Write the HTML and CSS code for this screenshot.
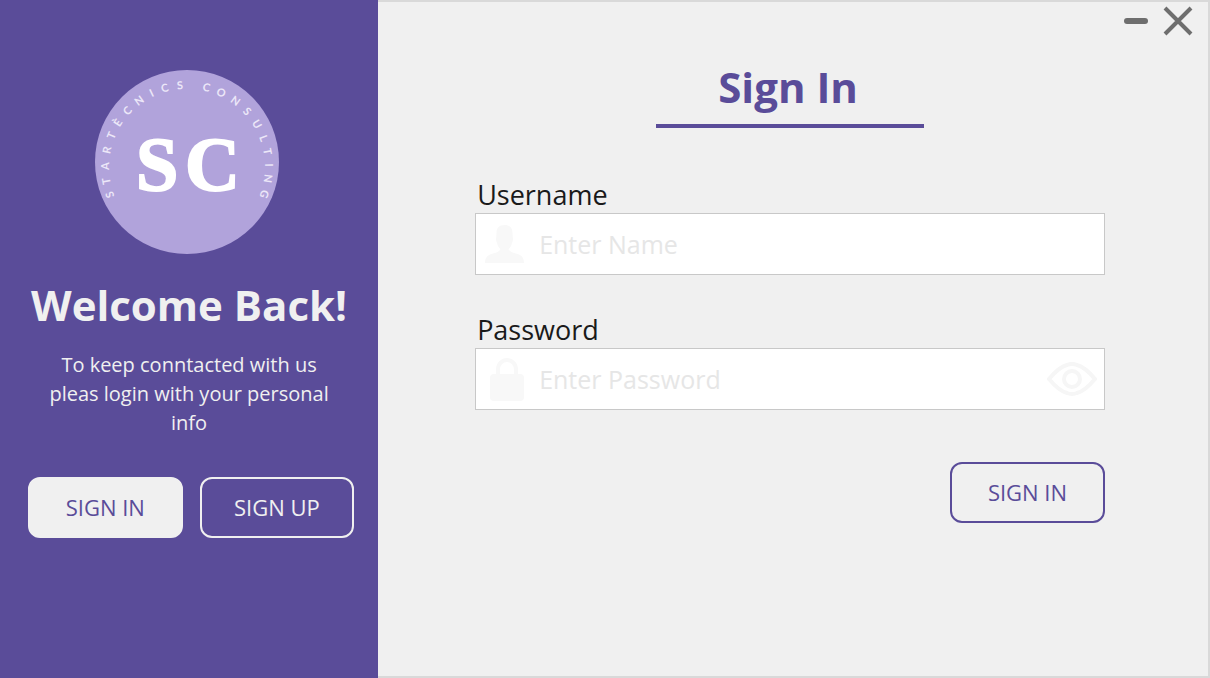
FILE: index.html
```html
<!DOCTYPE html>
<html lang="en">
<head>
<meta charset="utf-8">
<meta name="viewport" content="width=device-width, initial-scale=1">
<title>Sign In</title>
<link rel="stylesheet" href="styles.css">
</head>
<body>
<div class="window">
  <aside class="sidebar">
    <svg class="logo" viewBox="0 0 184 184" role="img" aria-label="Startècnics Consulting">
      <circle class="logo-disc" cx="92" cy="92" r="92"/>
      <path id="logo-arc" fill="none" d="M24.5 136A78 78 0 1 1 159.5 136"/>
      <text class="logo-ring" dx="11 7 8 8 8 7 8 7 8 8 8 0 16 7 7 8 8 8 8 8 7 7"><textPath href="#logo-arc">STARTÈCNICS CONSULTING</textPath></text>
      <text class="logo-initials" x="41 90" y="120">SC</text>
    </svg>
    <h2 class="welcome">Welcome Back!</h2>
    <p class="intro">To keep conntacted with us pleas login with your personal info</p>
    <div class="switch">
      <button class="button button-filled" type="button">SIGN IN</button>
      <button class="button button-light" type="button">SIGN UP</button>
    </div>
  </aside>
  <main class="main">
    <div class="controls">
      <button class="control" type="button" aria-label="Minimize">
        <svg width="28" height="30" viewBox="0 0 28 30"><path d="M4 15H22" stroke-width="6"/></svg>
      </button>
      <button class="control" type="button" aria-label="Close">
        <svg width="30" height="30" viewBox="0 0 30 30"><path class="cross" d="M2 2L28 28M28 2L2 28" stroke-width="4"/></svg>
      </button>
    </div>
    <form class="form">
      <h1 class="title">Sign In</h1>
      <div class="group">
        <label class="label" for="username">Username</label>
        <div class="field">
          <svg class="icon" width="40" height="40" viewBox="0 0 40 40"><path d="M19.500 1C14 1 11.500 4 11.500 9L11 16L12 19C12.500 22 14 24 15.500 25C14.500 27.500 12 28.500 8 29.500C3 31 0 33 0 39H39C39 33 36 31 31 29.500C27 28.500 24.500 27.500 23.500 25C25 24 26.500 22 27 19L28 16L27.500 9C27.500 4 25 1 19.500 1Z"/></svg>
          <input class="input" id="username" type="text" placeholder="Enter Name">
        </div>
      </div>
      <div class="group">
        <label class="label" for="password">Password</label>
        <div class="field">
          <svg class="icon" width="40" height="44" viewBox="0 0 40 44"><path fill-rule="evenodd" d="M11 17V12.500A11 11.500 0 0 1 33 12.500V17H35Q39 17 39 21V40Q39 44 35 44H9Q5 44 5 40V21Q5 17 9 17ZM15 17H29V12.500A7 7.500 0 0 0 15 12.500Z"/></svg>
          <input class="input" id="password" type="password" placeholder="Enter Password">
          <button class="reveal" type="button" aria-label="Show password">
            <svg width="50" height="34" viewBox="0 0 50 34"><path d="M2 17Q12 5 20 3Q25 1 30 3Q38 5 48 17Q38 29 30 31Q25 33 20 31Q12 29 2 17Z"/><circle cx="25" cy="17" r="8"/></svg>
          </button>
        </div>
      </div>
      <button class="button button-outline" type="submit">SIGN IN</button>
    </form>
  </main>
</div>
</body>
</html>
```
FILE: styles.css
```css
:root {
  --purple: #5a4c99;
  --surface: #f0f0f0;
  --edge: #d9d9d9;
}

* {
  box-sizing: border-box;
}

body {
  margin: 0;
  font-family: "Open Sans", sans-serif;
  background: var(--surface);
}

.window {
  display: grid;
  grid-template-columns: 5fr 11fr;
  min-height: 100vh;
}

.sidebar {
  display: flex;
  flex-direction: column;
  align-items: center;
  padding: 70px 0 24px;
  background: var(--purple);
  color: var(--surface);
}

.logo {
  width: 184px;
  height: 184px;
  margin-right: 4px;
}

.logo-disc {
  fill: #b1a3db;
}

.logo-ring {
  font: 700 11px Lato, sans-serif;
  fill: #ece7f8;
}

.logo-initials {
  font: 700 76px "Liberation Serif", serif;
  fill: #fff;
  stroke: #fff;
  stroke-width: 2px;
}

.welcome {
  margin: 23px 0 17px;
  font-size: 42px;
  line-height: 56px;
  font-weight: 700;
  white-space: nowrap;
}

.intro {
  max-width: 300px;
  margin: 0 0 40px;
  font-size: 20px;
  line-height: 29px;
  text-align: center;
}

.switch {
  display: grid;
  grid-template-columns: 1fr 1fr;
  gap: 17px;
  width: 100%;
  padding: 0 24px 0 28px;
}

.button {
  height: 61px;
  padding: 0 0 2px;
  border: 2px solid var(--surface);
  border-radius: 12px;
  background: transparent;
  font: 400 22px "Open Sans", sans-serif;
  color: var(--surface);
  cursor: pointer;
}

.button-filled {
  background: var(--surface);
  color: var(--purple);
}

.button-outline {
  align-self: flex-end;
  width: 155px;
  margin-top: 15px;
  border-color: var(--purple);
  color: var(--purple);
}

.main {
  display: flex;
  flex-direction: column;
  border: 2px solid var(--edge);
  border-left: 0;
}

.controls {
  display: flex;
  justify-content: flex-end;
  gap: 12px;
  padding: 4px 15px 0 0;
}

.control,
.reveal {
  display: flex;
  padding: 0;
  border: 0;
  background: none;
  cursor: pointer;
}

.control path {
  fill: none;
  stroke: #6e6e6e;
  stroke-linecap: round;
}

.control .cross {
  stroke-linecap: butt;
}

.form {
  display: flex;
  flex-direction: column;
  gap: 37px;
  padding: 23px 103px 24px 97px;
}

.title {
  align-self: center;
  width: 268px;
  margin: 0 0 12px;
  padding: 0 4px 9px 0;
  border-bottom: 4px solid var(--purple);
  font-size: 42px;
  line-height: 56px;
  text-align: center;
  color: var(--purple);
}

.group {
  display: flex;
  flex-direction: column;
}

.label {
  padding-left: 2px;
  font-size: 27px;
  line-height: 36px;
  color: #1a1a1a;
}

.field {
  display: flex;
  align-items: center;
  gap: 14px;
  height: 62px;
  padding: 0 7px 0 9px;
  border: 1px solid #c8c8c8;
  background: #fff;
}

.icon {
  flex: none;
  fill: #f8f8f8;
}

.input {
  flex: 1;
  min-width: 0;
  height: 100%;
  padding: 0;
  border: 0;
  outline: 0;
  background: transparent;
  font: 400 25px "Open Sans", sans-serif;
  color: #1a1a1a;
}

.input::placeholder {
  color: #e6e6e6;
  opacity: 1;
}

.reveal svg {
  fill: none;
  stroke: #f6f6f6;
  stroke-width: 4;
}
```
